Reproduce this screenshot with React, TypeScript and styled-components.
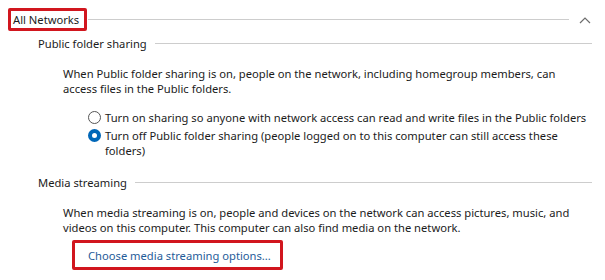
import { createGlobalStyle } from "styled-components";
import styled from "styled-components";

const Global = createGlobalStyle`
  html, body {
    margin: 0;
    padding: 0;
    background: #ffffff;
  }
  body {
    font-family: "Noto Sans", "Open Sans", Arial, sans-serif;
    font-size: 11.2px;
    color: #1b1b1b;
  }
`;

const Page = styled.div`
  width: 605px;
  height: 280px;
  box-sizing: border-box;
  padding: 8px 10px 0 8px;
  overflow: hidden;
`;

const GroupHeader = styled.div`
  display: flex;
  align-items: center;
  height: 23px;
`;

const TitleBox = styled.div`
  border: 3px solid #d1161e;
  border-radius: 2px;
  padding: 0 5px 0 2px;
  height: 23px;
  box-sizing: border-box;
  display: flex;
  align-items: center;
  white-space: nowrap;
`;

const Rule = styled.div<{ $gap?: number }>`
  flex: 1;
  height: 1px;
  background: #cdcdcd;
  margin-left: ${(p) => p.$gap ?? 6}px;
`;

const Chevron = styled.svg`
  width: 12px;
  height: 8px;
  margin: 0 4px 0 10px;
  flex: none;
`;

const SubHeader = styled.div<{ $top: number }>`
  display: flex;
  align-items: center;
  margin: ${(p) => p.$top}px 3px 0 30px;
  height: 16px;
  white-space: nowrap;
`;

const Paragraph = styled.p`
  margin: 15px 0 0 55px;
  line-height: 15px;
  white-space: nowrap;
`;

const RadioList = styled.div`
  margin: 14px 0 0 80px;
  display: flex;
  flex-direction: column;
  gap: 3px;
`;

const RadioRow = styled.label`
  display: flex;
  align-items: flex-start;
  line-height: 15px;
  gap: 4px;
  white-space: nowrap;
`;

const RadioDot = styled.span<{ $on?: boolean }>`
  flex: none;
  width: 13px;
  height: 13px;
  margin-top: 1px;
  border-radius: 50%;
  box-sizing: border-box;
  border: ${(p) => (p.$on ? "4px solid #0067b8" : "1px solid #555")};
  background: #ffffff;
`;

const LinkBox = styled.div`
  margin: 5px 0 0 64px;
  width: 211px;
  height: 30px;
  box-sizing: border-box;
  border: 3px solid #d1161e;
  border-radius: 2px;
  display: flex;
  align-items: center;
  padding-left: 13px;
`;

const Link = styled.span`
  color: #1f5c99;
  white-space: nowrap;
`;

export default function App() {
  return (
    <Page>
      <Global />
      <GroupHeader>
        <TitleBox>All Networks</TitleBox>
        <Rule $gap={1} />
        <Chevron viewBox="0 0 12 8">
          <path d="M1 7 L6 2 L11 7" fill="none" stroke="#6d6d6d" strokeWidth="1.2" />
        </Chevron>
      </GroupHeader>

      <SubHeader $top={4}>
        Public folder sharing
        <Rule $gap={8} />
      </SubHeader>
      <Paragraph>
        When Public folder sharing is on, people on the network, including homegroup members, can
        <br />
        access files in the Public folders.
      </Paragraph>
      <RadioList>
        <RadioRow>
          <RadioDot />
          <span>Turn on sharing so anyone with network access can read and write files in the Public folders</span>
        </RadioRow>
        <RadioRow>
          <RadioDot $on />
          <span>
            Turn off Public folder sharing (people logged on to this computer can still access these
            <br />
            folders)
          </span>
        </RadioRow>
      </RadioList>

      <SubHeader $top={16}>
        Media streaming
        <Rule $gap={8} />
      </SubHeader>
      <Paragraph>
        When media streaming is on, people and devices on the network can access pictures, music, and
        <br />
        videos on this computer. This computer can also find media on the network.
      </Paragraph>
      <LinkBox>
        <Link>Choose media streaming options...</Link>
      </LinkBox>
    </Page>
  );
}
